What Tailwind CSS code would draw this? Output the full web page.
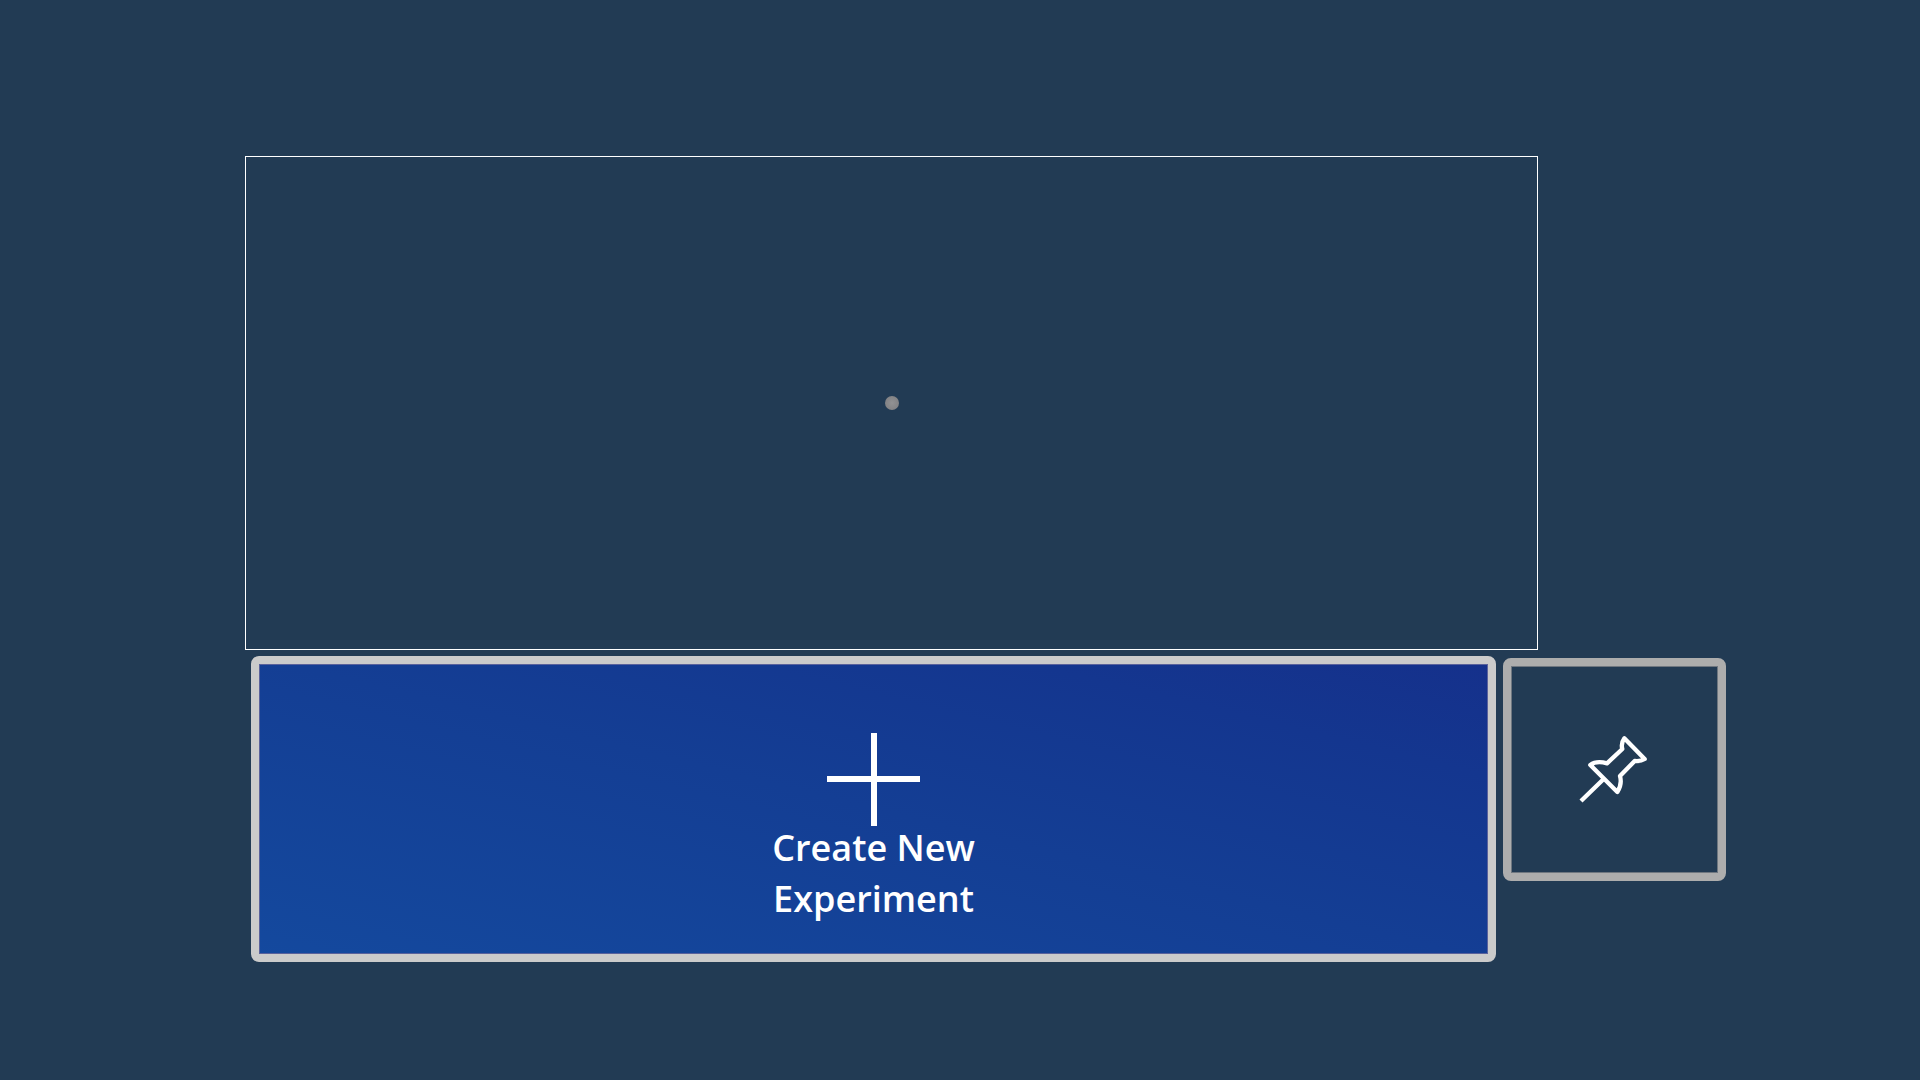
<!DOCTYPE html>
<html lang="en">
<head>
<meta charset="utf-8">
<meta name="viewport" content="width=device-width, initial-scale=1">
<title>Experiments</title>
<script src="https://cdn.jsdelivr.net/npm/@tailwindcss/browser@4"></script>
</head>
<body class="min-h-screen bg-[#223b54] font-['Open_Sans','Noto_Sans',sans-serif] text-white">
<main class="flex flex-col gap-1.5 pt-[156px] pr-[194px] pb-12 pl-[245px]">
  <section aria-label="Experiment area" class="mr-[188px] flex h-[494px] items-center justify-center border border-white">
    <span class="size-3.5 rounded-full bg-radial from-[#929294] to-[#7c7c7f]"></span>
  </section>
  <div class="flex items-start gap-[7px] pl-1.5">
    <button type="button" class="flex h-[306px] flex-1 flex-col items-center rounded-lg border-8 border-[#cbcbcb] bg-[linear-gradient(to_top_right,#14499e,#143e94_50%,#14368f_80%,#15308b)] bg-origin-border pt-[69px] inset-shadow-[0_0_0_1px_#5a629c]">
      <svg class="size-[93px]" viewBox="0 0 93 93" fill="none" stroke="currentColor" stroke-width="6" aria-hidden="true"><path d="M47 0V93M0 46H93"/></svg>
      <span class="-mt-1 w-60 text-center text-[36px] leading-[51px] font-semibold">Create New Experiment</span>
    </button>
    <button type="button" aria-label="Pin" class="mt-0.5 flex size-[223px] items-center justify-center rounded-lg border-8 border-[#adadad] inset-shadow-[0_0_0_1px_#6f7780]">
      <svg class="h-[100px] w-[110px]" viewBox="0 0 330 300" fill="none" stroke="currentColor" stroke-width="13" stroke-linejoin="round" aria-hidden="true"><path d="M63 243L131 177M91 135L172 216Q187 193 180 168L224 123Q242 125 254 117L193 55Q182 70 187 87L141 130Q109 121 91 135Z"/></svg>
    </button>
  </div>
</main>
</body>
</html>
